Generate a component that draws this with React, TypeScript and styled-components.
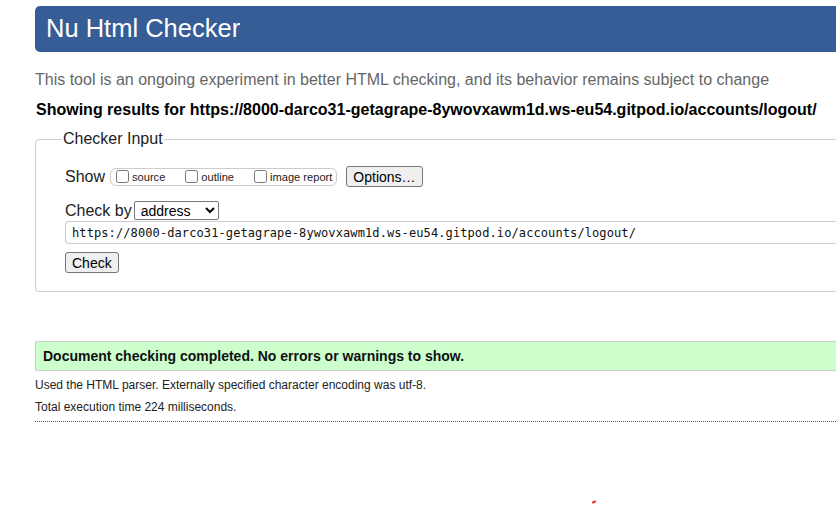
import React from "react";
import styled, { createGlobalStyle } from "styled-components";

const Global = createGlobalStyle`
  html, body { margin: 0; padding: 0; background: #fff; overflow: hidden; }
  body { font-family: "Liberation Sans", Arial, sans-serif; color: #000; }
`;

const Page = styled.div`
  width: 1000px;
  padding: 6px 0 0 35px;
  box-sizing: border-box;
`;

const Header = styled.h1`
  margin: 0;
  height: 46px;
  background: #365d95;
  color: #fff;
  border-radius: 5px 0 0 5px;
  font-size: 25.5px;
  font-weight: normal;
  line-height: 45px;
  padding-left: 11px;
`;

const Lead = styled.p`
  margin: 19px 0 0 0;
  font-size: 16px;
  line-height: 18px;
  color: #666;
`;

const Results = styled.p`
  margin: 12px 0 0 1px;
  font-size: 16px;
  line-height: 18px;
  font-weight: bold;
`;

const Fieldset = styled.fieldset`
  margin: 11px 0 0 0;
  border: 1px solid #ccc;
  border-radius: 4px;
  padding: 10px 0 18px 29px;
  min-height: 0;
`;

const Legend = styled.legend`
  font-size: 16px;
  margin-left: -3px;
  padding: 0 1px;
  line-height: 18px;
  color: #222;
`;

const Row = styled.div<{ $top?: number }>`
  display: flex;
  align-items: center;
  margin-top: ${(p) => p.$top ?? 0}px;
  font-size: 16px;
`;

const RowLabel = styled.span`
  font-size: 16px;
  color: #222;
  margin-right: 5px;
`;

const Group = styled.span`
  display: inline-flex;
  align-items: center;
  border: 1px solid #ccc;
  border-radius: 6px;
  height: 16px;
  padding: 0 4px 0 5px;
`;

const Check = styled.label<{ $gap?: number }>`
  display: inline-flex;
  align-items: center;
  font-size: 11.1px;
  margin-left: ${(p) => p.$gap ?? 0}px;
  color: #222;
  input {
    margin: 0 3px 0 0;
    width: 13px;
    height: 13px;
  }
`;

const Button = styled.button`
  font-family: "Liberation Sans", Arial, sans-serif;
  font-size: 14px;
  height: 21px;
  padding: 0 6px;
  border: 1px solid #767676;
  border-radius: 3px;
  background: #efefef;
  color: #000;
  margin-left: 9px;
`;

const Select = styled.select`
  font-family: "Liberation Sans", Arial, sans-serif;
  font-size: 14px;
  height: 19px;
  width: 85px;
  border: 1px solid #767676;
  border-radius: 2px;
  background: #fff;
  padding: 0 0 0 2px;
  margin-left: -3px;
`;

const UrlInput = styled.input`
  display: block;
  box-sizing: border-box;
  width: 900px;
  height: 23px;
  margin-top: 1px;
  border: 1px solid #ccc;
  border-right: none;
  border-radius: 4px 0 0 4px;
  font-family: "DejaVu Sans Mono", monospace;
  font-size: 12px;
  letter-spacing: 0.1px;
  padding: 0 6px;
  color: #111;
  outline: none;
`;

const CheckButton = styled(Button)`
  margin: 8px 0 0 0;
`;

const Success = styled.p`
  margin: 49px 0 0 0;
  background: #ccffcc;
  border: 1px solid #ccc;
  border-right: none;
  border-radius: 3px 0 0 3px;
  height: 28px;
  line-height: 28px;
  padding-left: 7px;
  font-weight: bold;
  font-size: 14px;
  color: #111;
`;

const Details = styled.p`
  margin: 7px 0 0 0;
  font-size: 12px;
  line-height: 14px;
  color: #222;
`;

const Details2 = styled(Details)`
  margin-top: 8px;
`;

const Rule = styled.hr`
  margin: 7px 0 0 0;
  border: none;
  border-top: 1px dotted #555;
  height: 0;
`;

const Mark = styled.span`
  position: absolute;
  left: 592px;
  top: 501px;
  width: 4px;
  height: 2px;
  background: #e22;
  transform: rotate(-25deg);
`;

export default function App() {
  const url =
    "https://8000-darco31-getagrape-8ywovxawm1d.ws-eu54.gitpod.io/accounts/logout/";
  return (
    <>
      <Global />
      <Page>
        <Header>Nu Html Checker</Header>
        <Lead>
          This tool is an ongoing experiment in better HTML checking, and its
          behavior remains subject to change
        </Lead>
        <Results>Showing results for {url}</Results>
        <Fieldset>
          <Legend>Checker Input</Legend>
          <Row $top={8}>
            <RowLabel>Show</RowLabel>
            <Group>
              <Check>
                <input type="checkbox" />
                source
              </Check>
              <Check $gap={20}>
                <input type="checkbox" />
                outline
              </Check>
              <Check $gap={20}>
                <input type="checkbox" />
                image report
              </Check>
            </Group>
            <Button>Options…</Button>
          </Row>
          <Row $top={14}>
            <RowLabel>Check by</RowLabel>
            <Select defaultValue="address">
              <option value="address">address</option>
              <option value="file">file upload</option>
              <option value="text">text input</option>
            </Select>
          </Row>
          <UrlInput defaultValue={url} />
          <CheckButton>Check</CheckButton>
        </Fieldset>
        <Success>Document checking completed. No errors or warnings to show.</Success>
        <Details>
          Used the HTML parser. Externally specified character encoding was utf-8.
        </Details>
        <Details2>Total execution time 224 milliseconds.</Details2>
        <Rule />
      </Page>
      <Mark />
    </>
  );
}
